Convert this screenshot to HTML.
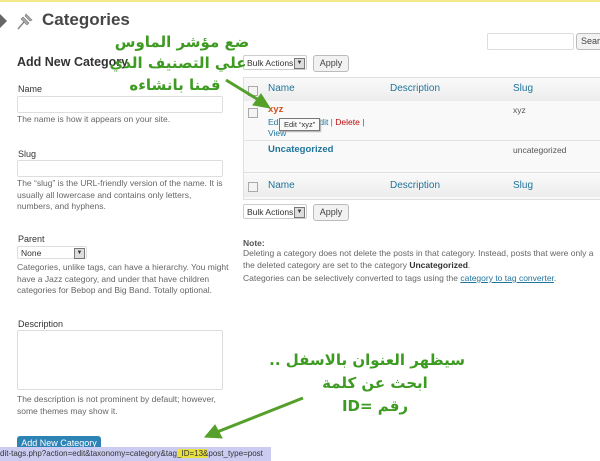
<!DOCTYPE html>
<html><head><meta charset="utf-8"><style>
body{margin:0;width:600px;height:461px;overflow:hidden;background:#fff;font-family:"Liberation Sans",sans-serif;position:relative;font-size:9px;color:#333}
.a{position:absolute}
.lbl{font-size:9px;color:#333}
.help{font-size:8.5px;color:#666;line-height:11.5px}
.inp{border:1px solid #ddd;background:#fff;border-radius:2px}
.btn{border:1px solid #bbb;border-radius:3px;background:#f2f2f2;font-size:9px;color:#444;text-align:center;line-height:15px}
.blue{color:#21759b}
.cb{width:8px;height:8px;border:1px solid #aaa;background:#f4f4f4}
.ar{font-family:"DejaVu Sans",sans-serif;font-weight:bold;color:#3d9b22;font-size:15px;direction:rtl;text-align:center;white-space:nowrap}
</style></head><body>
<div class="a" style="left:0;top:0;width:600px;height:2px;background:#f3e88a"></div>
<div class="a" style="left:0;top:14px;width:7px;height:14px;background:#666;clip-path:polygon(0 0,100% 50%,0 100%)"></div>
<svg class="a" style="left:14px;top:10px" width="22" height="22" viewBox="0 0 22 22"><path d="M4 19 L10 12" stroke="#888" stroke-width="1.5"/><path d="M9 7 L15 13 L13 15 L7 9Z M12 4 L18 10 L16 11 L11 6Z" fill="#aaa" stroke="#777" stroke-width=".6"/></svg>
<div class="a" style="left:42px;top:10px;font-size:17px;font-weight:bold;color:#464646">Categories</div>
<div class="a inp" style="left:487px;top:33px;width:85px;height:15px"></div>
<div class="a btn" style="left:576px;top:33px;width:30px;height:15px;text-align:left;padding-left:4px">Search</div>

<div class="a" style="left:17px;top:55px;font-size:12.5px;font-weight:bold;color:#333">Add New Category</div>
<div class="a lbl" style="left:18px;top:84px">Name</div>
<div class="a inp" style="left:17px;top:96px;width:204px;height:15px"></div>
<div class="a help" style="left:17px;top:114px">The name is how it appears on your site.</div>
<div class="a lbl" style="left:18px;top:149px">Slug</div>
<div class="a inp" style="left:17px;top:160px;width:204px;height:15px"></div>
<div class="a help" style="left:17px;top:178px;width:210px">The “slug” is the URL-friendly version of the name. It is usually all lowercase and contains only letters, numbers, and hyphens.</div>
<div class="a lbl" style="left:18px;top:234px">Parent</div>
<div class="a inp" style="left:17px;top:246px;width:70px;height:13px;font-size:8.5px;line-height:13px;padding-left:3px;box-sizing:border-box">None<span style="position:absolute;right:1px;top:1px;width:9px;height:9px;border:1px solid #777;background:#ddd;font-size:6px;line-height:9px;text-align:center">▼</span></div>
<div class="a help" style="left:17px;top:262px;width:212px">Categories, unlike tags, can have a hierarchy. You might have a Jazz category, and under that have children categories for Bebop and Big Band. Totally optional.</div>
<div class="a lbl" style="left:18px;top:319px">Description</div>
<div class="a inp" style="left:17px;top:330px;width:204px;height:58px"></div>
<div class="a help" style="left:17px;top:394px;width:212px">The description is not prominent by default; however, some themes may show it.</div>
<div class="a" style="left:17px;top:436px;width:84px;height:16px;background:#2e83b5;border-radius:3px;color:#fff;font-size:9px;text-align:center;line-height:15px">Add New Category</div>
<div class="a" style="left:0;top:447px;width:271px;height:14px;background:#ccccf2;font-size:8px;line-height:14px;color:#333;white-space:nowrap;overflow:hidden">dit-tags.php?action=edit&amp;taxonomy=category&amp;tag<span style="background:#e8e040">_ID=13&amp;</span>post_type=post</div>

<div class="a inp" style="left:243px;top:55px;width:64px;height:15px;font-size:8.5px;line-height:15px;padding-left:3px;box-sizing:border-box;border-color:#ccc">Bulk Actions<span style="position:absolute;right:1px;top:2px;width:9px;height:9px;border:1px solid #777;background:#ddd;font-size:6px;line-height:9px;text-align:center">▼</span></div>
<div class="a btn" style="left:313px;top:55px;width:34px;height:15px">Apply</div>

<div class="a" style="left:243px;top:77px;width:357px;height:121px;border:1px solid #dfdfdf;border-right:0;background:#f9f9f9"></div>
<div class="a" style="left:244px;top:78px;width:356px;height:23px;background:linear-gradient(#fafafa,#ececec)"></div>
<div class="a" style="left:244px;top:173px;width:356px;height:24px;background:linear-gradient(#fafafa,#ececec)"></div>
<div class="a" style="left:244px;top:140px;width:356px;height:1px;background:#e3e3e3"></div>
<div class="a" style="left:244px;top:172px;width:356px;height:1px;background:#dfdfdf"></div>
<div class="a cb" style="left:248px;top:86px"></div>
<div class="a blue" style="left:268px;top:83px;font-size:10px">Name</div>
<div class="a blue" style="left:390px;top:83px;font-size:10px">Description</div>
<div class="a blue" style="left:513px;top:83px;font-size:10px">Slug</div>
<div class="a cb" style="left:248px;top:108px"></div>
<div class="a" style="left:268px;top:104px;font-size:9.5px;font-weight:bold;color:#d54e21">xyz</div>
<div class="a" style="left:513px;top:105px;font-size:8.5px;color:#555">xyz</div>
<div class="a" style="left:268px;top:117px;font-size:8.5px;color:#21759b">Edit | Quick Edit | <span style="color:#bc0b0b">Delete</span> <span style="color:#555">|</span></div>
<div class="a" style="left:268px;top:128px;font-size:8.5px;color:#21759b">View</div>
<div class="a" style="left:279px;top:118px;border:1px solid #777;background:#fafafa;font-size:7.5px;padding:1px 4px;color:#333;box-shadow:1px 1px 1px #aaa">Edit “xyz”</div>
<div class="a blue" style="left:268px;top:144px;font-size:9.5px;font-weight:bold">Uncategorized</div>
<div class="a" style="left:513px;top:145px;font-size:8.5px;color:#555">uncategorized</div>
<div class="a cb" style="left:248px;top:182px"></div>
<div class="a blue" style="left:268px;top:180px;font-size:10px">Name</div>
<div class="a blue" style="left:390px;top:180px;font-size:10px">Description</div>
<div class="a blue" style="left:513px;top:180px;font-size:10px">Slug</div>

<div class="a inp" style="left:243px;top:204px;width:64px;height:15px;font-size:8.5px;line-height:15px;padding-left:3px;box-sizing:border-box;border-color:#ccc">Bulk Actions<span style="position:absolute;right:1px;top:2px;width:9px;height:9px;border:1px solid #777;background:#ddd;font-size:6px;line-height:9px;text-align:center">▼</span></div>
<div class="a btn" style="left:313px;top:204px;width:34px;height:15px">Apply</div>

<div class="a" style="left:243px;top:238px;font-size:8.5px;font-weight:bold;color:#555">Note:</div>
<div class="a help" style="left:243px;top:248px;width:370px;white-space:nowrap">Deleting a category does not delete the posts in that category. Instead, posts that were only a<br>the deleted category are set to the category <b style="color:#333">Uncategorized</b>.</div>
<div class="a help" style="left:243px;top:273px;white-space:nowrap">Categories can be selectively converted to tags using the <span style="color:#21759b;text-decoration:underline">category to tag converter</span>.</div>

<div class="a ar" style="left:107px;top:33px;width:150px">ضع مؤشر الماوس</div>
<div class="a ar" style="left:103px;top:54px;width:150px">علي التصنيف الذي</div>
<div class="a ar" style="left:120px;top:76px;width:110px">قمنا بانشاءه</div>
<div class="a ar" style="left:285px;top:351px;width:180px">سيظهر العنوان بالاسفل ..</div>
<div class="a ar" style="left:300px;top:374px;width:150px">ابحث عن كلمة</div>
<div class="a ar" style="left:320px;top:397px;width:110px">رقم =ID</div>
<svg class="a" style="left:0;top:0" width="600" height="461"><g stroke="#55a02a" stroke-width="3" fill="#55a02a"><line x1="226" y1="80" x2="262" y2="102"/><polygon points="270,108 253,105 261,94" stroke-width="1"/><line x1="303" y1="398" x2="217" y2="432"/><polygon points="205,437 215,425 222,438" stroke-width="1"/></g></svg>
</body></html>
